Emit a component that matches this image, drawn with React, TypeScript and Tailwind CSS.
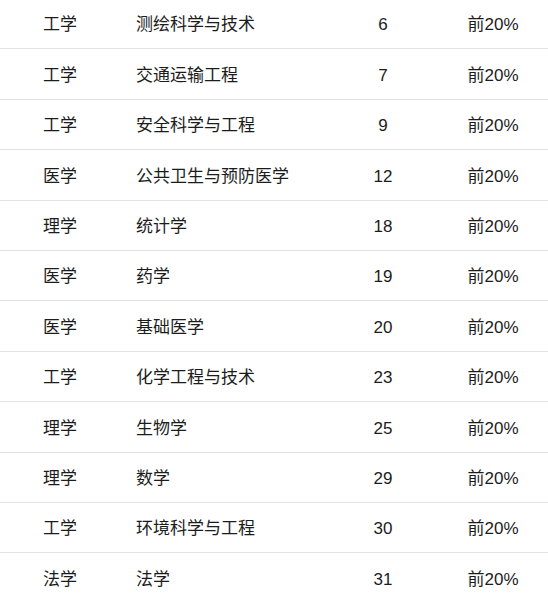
const rows: [string, string, number][] = [
  ['工学', '测绘科学与技术', 6],
  ['工学', '交通运输工程', 7],
  ['工学', '安全科学与工程', 9],
  ['医学', '公共卫生与预防医学', 12],
  ['理学', '统计学', 18],
  ['医学', '药学', 19],
  ['医学', '基础医学', 20],
  ['工学', '化学工程与技术', 23],
  ['理学', '生物学', 25],
  ['理学', '数学', 29],
  ['工学', '环境科学与工程', 30],
  ['法学', '法学', 31],
]

export default function App() {
  return (
    <div
      className="h-[600px] w-[548px] overflow-hidden bg-white text-[17px] text-[#1c1c1c]"
      style={{ fontFamily: '"Liberation Sans", "Noto Sans CJK SC", sans-serif' }}
    >
      <div className="-mt-[1px]">
        {rows.map(([category, major, rank], i) => (
          <div
            key={i}
            className="grid h-[50.4px] grid-cols-[120px_208px_110px_110px] items-center border-b border-[#e3e3e3] pt-[3px]"
          >
            <div className="text-center">{category}</div>
            <div className="pl-4">{major}</div>
            <div className="text-center">{rank}</div>
            <div className="text-center">前20%</div>
          </div>
        ))}
      </div>
    </div>
  )
}
